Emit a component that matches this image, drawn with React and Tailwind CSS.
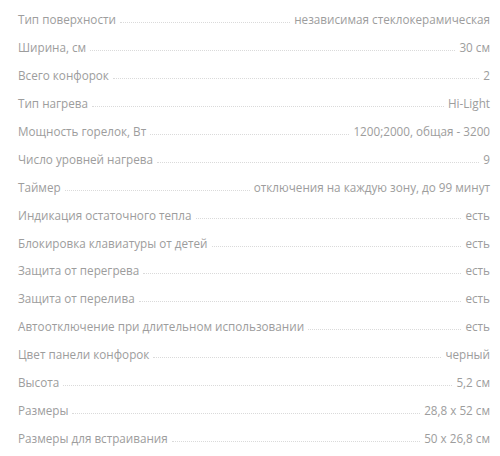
import React from "react";

const specs = [
  ["Тип поверхности", "независимая стеклокерамическая"],
  ["Ширина, см", "30 см"],
  ["Всего конфорок", "2"],
  ["Тип нагрева", "Hi-Light"],
  ["Мощность горелок, Вт", "1200;2000, общая - 3200"],
  ["Число уровней нагрева", "9"],
  ["Таймер", "отключения на каждую зону, до 99 минут"],
  ["Индикация остаточного тепла", "есть"],
  ["Блокировка клавиатуры от детей", "есть"],
  ["Защита от перегрева", "есть"],
  ["Защита от перелива", "есть"],
  ["Автоотключение при длительном использовании", "есть"],
  ["Цвет панели конфорок", "черный"],
  ["Высота", "5,2 см"],
  ["Размеры", "28,8 x 52 см"],
  ["Размеры для встраивания", "50 x 26,8 см"],
];

export default function App() {
  return (
    <div className="bg-white w-[500px] h-[456px] pl-[18px] pr-[10px] pt-[7px] font-['Open_Sans',sans-serif] text-[11.7px] text-[#9d9d9d]">
      {specs.map(([label, value], i) => (
        <div key={i} className="flex items-baseline h-[27.95px] leading-[24px]">
          <span className="whitespace-nowrap">{label}</span>
          <span className="flex-1 mx-[4px] border-b border-dotted border-[#dadada] translate-y-[-1px]"></span>
          <span className="whitespace-nowrap">{value}</span>
        </div>
      ))}
    </div>
  );
}
